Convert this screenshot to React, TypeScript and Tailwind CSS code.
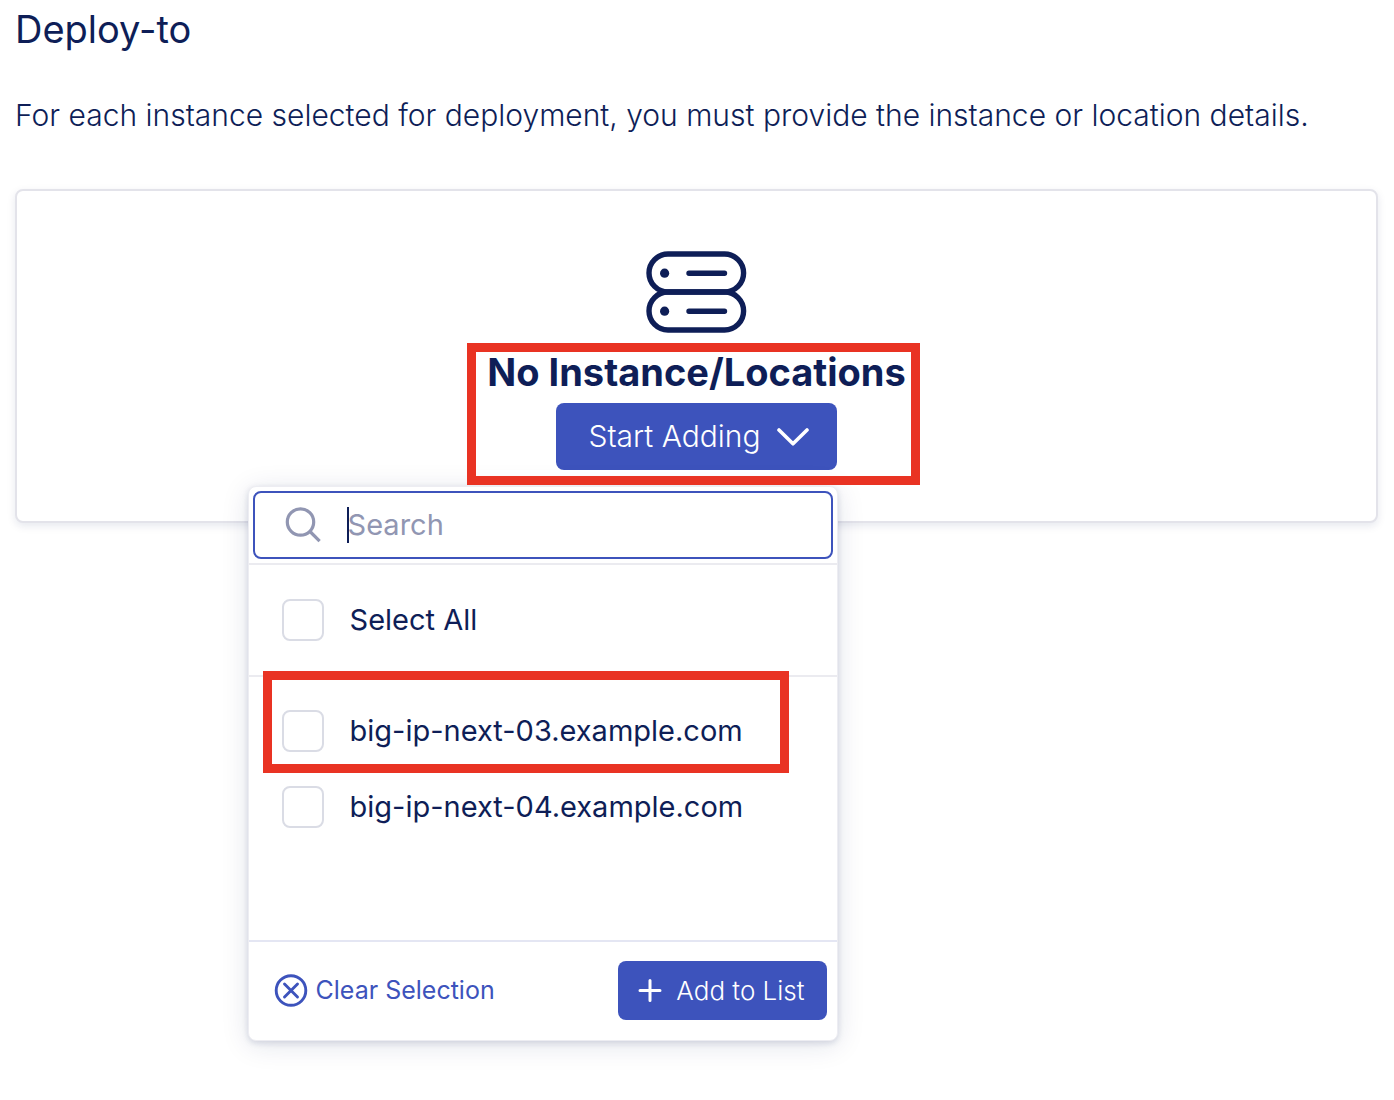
import React from "react";

function ServersIcon() {
  return (
    <svg className="h-[82px] w-[102px]" viewBox="0 0 102 82" fill="none" stroke="#0e1e57" strokeWidth="5.4" strokeLinecap="round" aria-hidden="true">
      <rect x="3" y="3" width="94.6" height="38" rx="19" />
      <rect x="3" y="41" width="94.6" height="38" rx="19" />
      <path d="M43 22.2h35.500M43 60.200h35.500" />
      <circle cx="18.600" cy="22.200" r="4.600" fill="#0e1e57" stroke="none" />
      <circle cx="18.600" cy="60.200" r="4.600" fill="#0e1e57" stroke="none" />
    </svg>
  );
}

function Highlight({ className }: { className: string }) {
  return <div className={`pointer-events-none absolute z-20 border-[9px] border-[#e93323] ${className}`} />;
}

function Option({ label }: { label: string }) {
  return (
    <label className="flex items-center gap-[26px] text-[29px] leading-[42px] text-[#0e1e57]">
      <input
        type="checkbox"
        className="size-[42px] shrink-0 appearance-none rounded-lg border-2 border-[#dadce5] bg-white checked:border-[#3d53bc] checked:bg-[#3d53bc]"
      />
      {label}
    </label>
  );
}

function InstanceMenu() {
  return (
    <div className="absolute top-full -right-px z-10 mt-4 w-[590px] rounded-lg border border-[#ededf2] bg-white text-left shadow-[0_4px_28px_rgba(14,30,87,0.12),0_2px_6px_rgba(14,30,87,0.14)]">
      <div className="border-b-2 border-[#ebebf0] p-1">
        <label className="relative flex h-[68px] items-center rounded-lg border-2 border-[#3d53bc] bg-white pl-[30px]">
          <svg className="size-9 shrink-0" viewBox="0 0 36 36" fill="none" stroke="#9196b2" strokeWidth="3.200" aria-hidden="true">
            <circle cx="15.500" cy="15" r="13.200" />
            <path d="M25 24.500l9.600 9.600" />
          </svg>
          <input
            type="search"
            aria-label="Search"
            placeholder="Search"
            className="ml-[27px] min-w-0 flex-1 bg-transparent text-[29px] leading-[42px] text-[#0e1e57] caret-transparent outline-none placeholder:text-[#9196b2]"
          />
          <span className="absolute top-[14px] left-[92px] h-9 w-[2px] bg-[#0e1e57]" />
        </label>
      </div>
      <div className="border-b-2 border-[#ebebf0] px-[33px] py-[34px]">
        <Option label="Select All" />
      </div>
      <div className="flex h-[265px] flex-col gap-[34px] border-b-2 border-[#e4e6f3] px-[33px] pt-[33px]">
        <div className="relative">
          <Highlight className="-top-[39px] -left-[19px] h-[102px] w-[526px]" />
          <Option label="big-ip-next-03.example.com" />
        </div>
        <Option label="big-ip-next-04.example.com" />
      </div>
      <div className="flex items-center justify-between pt-[19px] pr-[10px] pb-5 pl-[25px]">
        <button type="button" className="flex items-center gap-2 text-[25px] text-[#3d53bc]">
          <svg className="size-[34px]" viewBox="0 0 34 34" fill="none" stroke="currentColor" strokeWidth="2.900" strokeLinecap="round" aria-hidden="true">
            <circle cx="17" cy="16.500" r="14.800" />
            <path d="M10.500 10l13 13M23.500 10l-13 13" />
          </svg>
          Clear Selection
        </button>
        <button type="button" className="flex h-[59px] items-center gap-[14px] rounded-lg bg-[#3d53bc] pr-[22px] pl-5 text-[26px] font-light text-white">
          <svg className="size-6" viewBox="0 0 24 24" fill="none" stroke="currentColor" strokeWidth="3" strokeLinecap="round" aria-hidden="true">
            <path d="M12 1.500v20M2 11.500h20" />
          </svg>
          Add to List
        </button>
      </div>
    </div>
  );
}

export default function App() {
  return (
    <main className="min-h-screen bg-white pr-4 pl-[15px] font-['Inter',sans-serif] text-[#0e1e57]">
      <h1 className="pt-[5px] text-[38px] leading-[48px]">Deploy-to</h1>
      <p className="pt-[41px] pb-px text-[30px] leading-[42px] font-light">
        For each instance selected for deployment, you must provide the instance or location details.
      </p>
      <section className="mt-[52px] flex flex-col items-center rounded-lg border-2 border-[#e3e3ea] bg-white pt-[60px] pb-[51px] shadow-[0_3px_8px_rgba(14,30,87,0.10)]">
        <ServersIcon />
        <div className="relative flex flex-col items-center gap-[7px] pt-[15px]">
          <Highlight className="top-[10px] -right-[14px] h-[142px] -left-5" />
          <h2 className="text-[38px] leading-[48px] font-bold">No Instance/Locations</h2>
          <div className="relative">
            <button type="button" aria-expanded="true" className="flex h-[67px] items-center gap-4 rounded-lg bg-[#3d53bc] pr-7 pl-8 text-[30px] font-light text-white">
              Start Adding
              <svg className="h-[18px] w-8" viewBox="0 0 32 18" fill="none" stroke="currentColor" strokeWidth="3.600" strokeLinecap="round" strokeLinejoin="round" aria-hidden="true">
                <path d="M2 2l14 13.800L30 2" />
              </svg>
            </button>
            <InstanceMenu />
          </div>
        </div>
      </section>
    </main>
  );
}
